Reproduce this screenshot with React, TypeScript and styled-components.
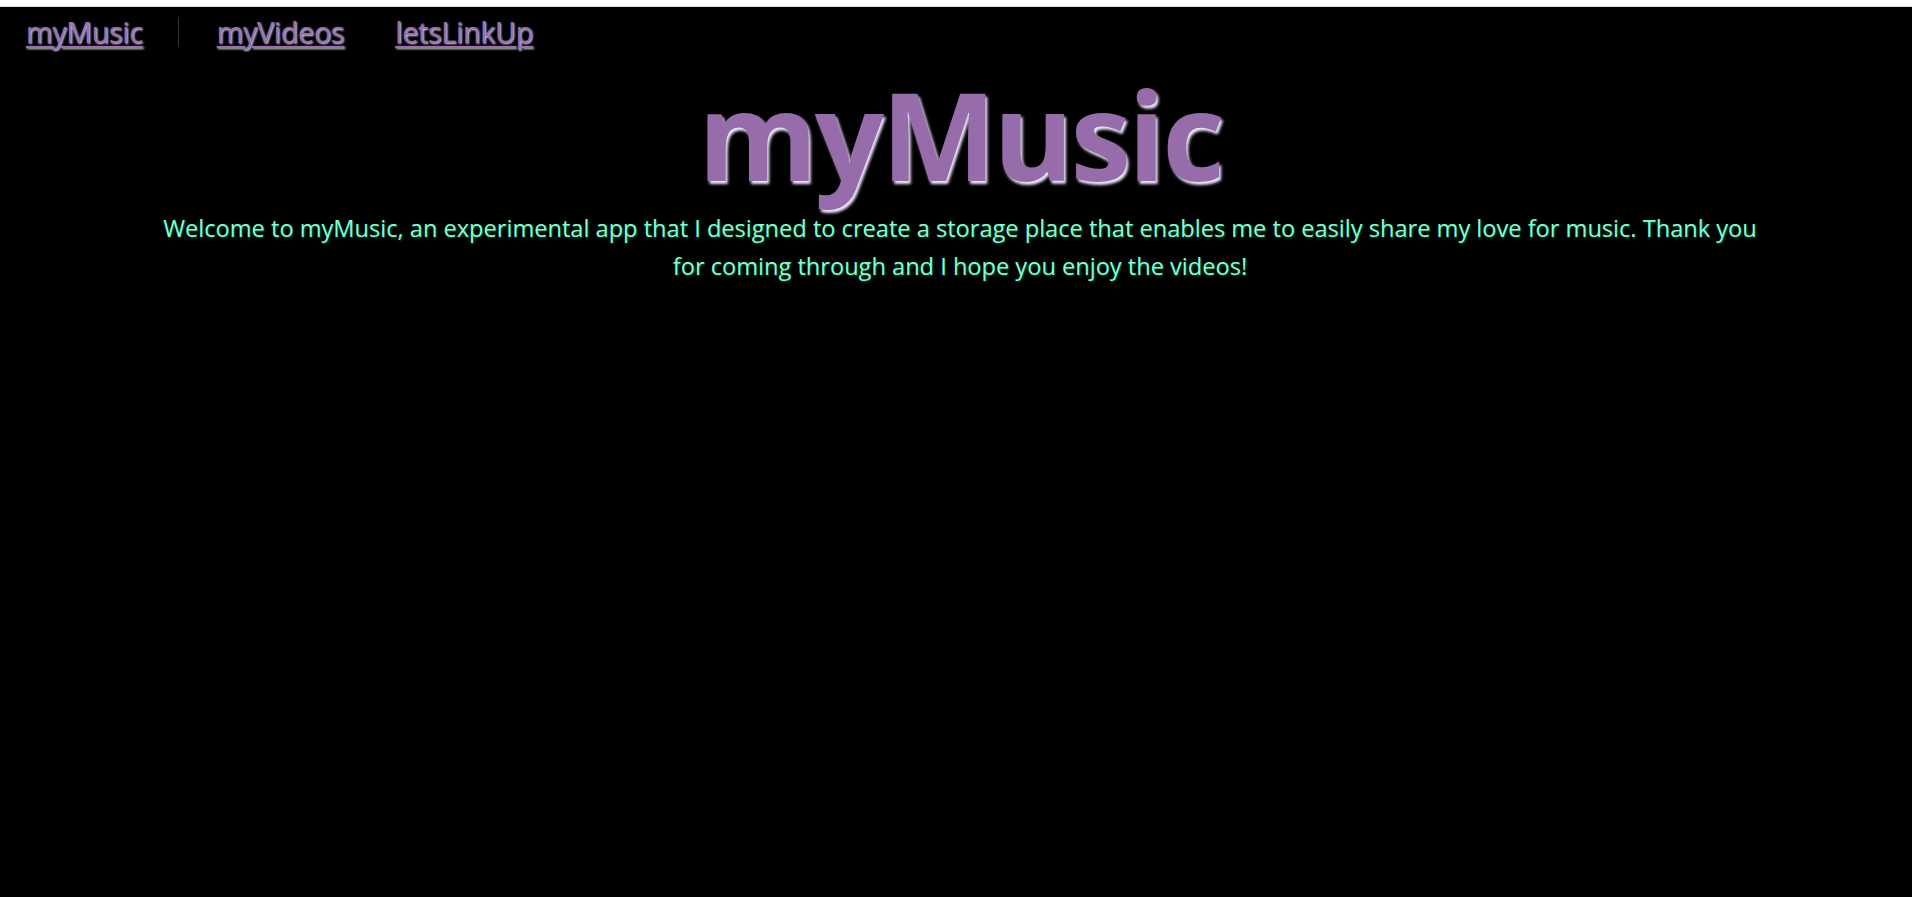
import React from 'react';
import styled, { createGlobalStyle } from 'styled-components';

const GlobalStyle = createGlobalStyle`
  html {
    background: #ffffff;
  }
  body {
    margin: 0;
    padding-top: 6px;
    font-family: "Open Sans", "Noto Sans", "DejaVu Sans", sans-serif;
  }
`;

const Page = styled.div`
  min-height: calc(100vh - 6px);
  background: #000000;
  border-top: 1px solid #d8d8d8;
  box-sizing: border-box;
`;

const NavBar = styled.nav`
  display: flex;
  align-items: center;
  padding: 10px 0 0 26px;
`;

const NavItem = styled.div<{ $divider?: boolean; $gap: number }>`
  display: flex;
  align-items: center;
  height: 30px;
  margin-right: ${(p) => p.$gap}px;
  padding-right: ${(p) => (p.$divider ? 35 : 0)}px;
  border-right: ${(p) => (p.$divider ? '1px solid #2f3333' : 'none')};
`;

const NavLink = styled.a`
  color: #9b6fae;
  font-size: 28.5px;
  line-height: 30px;
  letter-spacing: -0.2px;
  text-decoration: underline;
  text-decoration-thickness: 2px;
  text-underline-offset: 3px;
  text-shadow: 1px 1px 2px #e6e0f5;
  cursor: pointer;
`;

const Hero = styled.header`
  display: flex;
  flex-direction: column;
  align-items: center;
  padding-left: 8px;
`;

const Title = styled.h1`
  margin: 12px 0 0;
  color: #976cab;
  font-size: 122px;
  font-weight: 700;
  letter-spacing: -3px;
  line-height: 150px;
  text-shadow: 2px 3px 3px #efeaff;
`;

const Intro = styled.p`
  margin: 0;
  max-width: 1612px;
  color: #7fffd4;
  font-size: 23.6px;
  line-height: 38px;
  text-align: center;
  text-shadow: 1px 1px 2px #0b5a38;
`;

const links = [
  { label: 'myMusic', divider: true, gap: 38 },
  { label: 'myVideos', divider: false, gap: 51 },
  { label: 'letsLinkUp', divider: false, gap: 0 },
];

export default function App() {
  return (
    <>
      <GlobalStyle />
      <Page>
        <NavBar>
          {links.map((l) => (
            <NavItem key={l.label} $divider={l.divider} $gap={l.gap}>
              <NavLink href="#">{l.label}</NavLink>
            </NavItem>
          ))}
        </NavBar>
        <Hero>
          <Title>myMusic</Title>
          <Intro>
            Welcome to myMusic, an experimental app that I designed to create a storage place that
            enables me to easily share my love for music. Thank you for coming through and I hope
            you enjoy the videos!
          </Intro>
        </Hero>
      </Page>
    </>
  );
}
